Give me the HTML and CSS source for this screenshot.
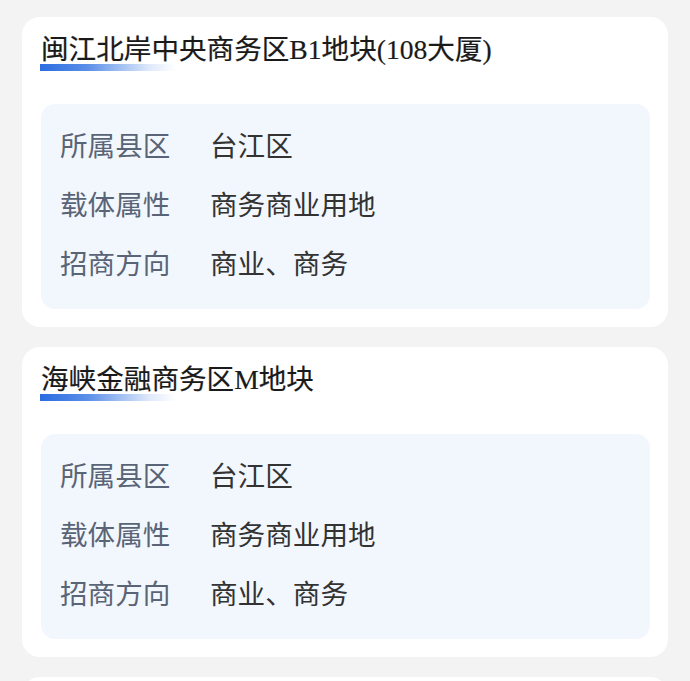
FILE: index.html
```html
<!DOCTYPE html>
<html lang="zh-CN">
<head>
<meta charset="utf-8">
<link rel="stylesheet" href="styles.css">
</head>
<body>
<div class="list">
  <div class="card">
    <div class="title"><span class="title-text">闽江北岸中央商务区B1地块(108大厦)</span></div>
    <div class="info">
      <div class="row"><span class="label">所属县区</span><span class="value">台江区</span></div>
      <div class="row"><span class="label">载体属性</span><span class="value">商务商业用地</span></div>
      <div class="row"><span class="label">招商方向</span><span class="value">商业、商务</span></div>
    </div>
  </div>
  <div class="card">
    <div class="title"><span class="title-text">海峡金融商务区M地块</span></div>
    <div class="info">
      <div class="row"><span class="label">所属县区</span><span class="value">台江区</span></div>
      <div class="row"><span class="label">载体属性</span><span class="value">商务商业用地</span></div>
      <div class="row"><span class="label">招商方向</span><span class="value">商业、商务</span></div>
    </div>
  </div>
  <div class="card card-peek"></div>
</div>
</body>
</html>
```
FILE: styles.css
```css
html, body {
  margin: 0;
  padding: 0;
  background: #f3f3f3;
}
body {
  font-family: "Noto Sans CJK SC", "Noto Sans", sans-serif;
  overflow: hidden;
  height: 681px;
}
.list {
  display: flex;
  flex-direction: column;
  gap: 20px;
  padding: 17px 22px 0 22px;
}
.card {
  background: #ffffff;
  border-radius: 18px;
  padding: 18px 18px 18px 19px;
}
.card-peek {
  height: 40px;
}
.title {
  position: relative;
  height: 30px;
  line-height: 30px;
  margin-bottom: 39px;
}
.title-text {
  position: relative;
  z-index: 1;
  font-family: "Liberation Serif", "Noto Sans CJK SC", serif;
  font-weight: 400;
  font-size: 27.6px;
  color: #1a1a1a;
  white-space: nowrap;
  -webkit-text-stroke: 0.2px #1a1a1a;
}
.title::after {
  content: "";
  position: absolute;
  left: -1px;
  top: 29px;
  width: 136px;
  height: 7px;
  background: linear-gradient(90deg, #2b6ce0 0%, #5b8fe8 35%, rgba(200, 218, 248, 0.6) 80%, rgba(255, 255, 255, 0) 100%);
}
.info {
  background: #f2f7fd;
  border-radius: 14px;
  padding: 11px 19px 17px 19px;
}
.row {
  display: flex;
  line-height: 59px;
  height: 59px;
  font-size: 27.6px;
}
.label {
  width: 150px;
  flex: none;
  color: #5a6477;
}
.value {
  color: #333333;
}
```
